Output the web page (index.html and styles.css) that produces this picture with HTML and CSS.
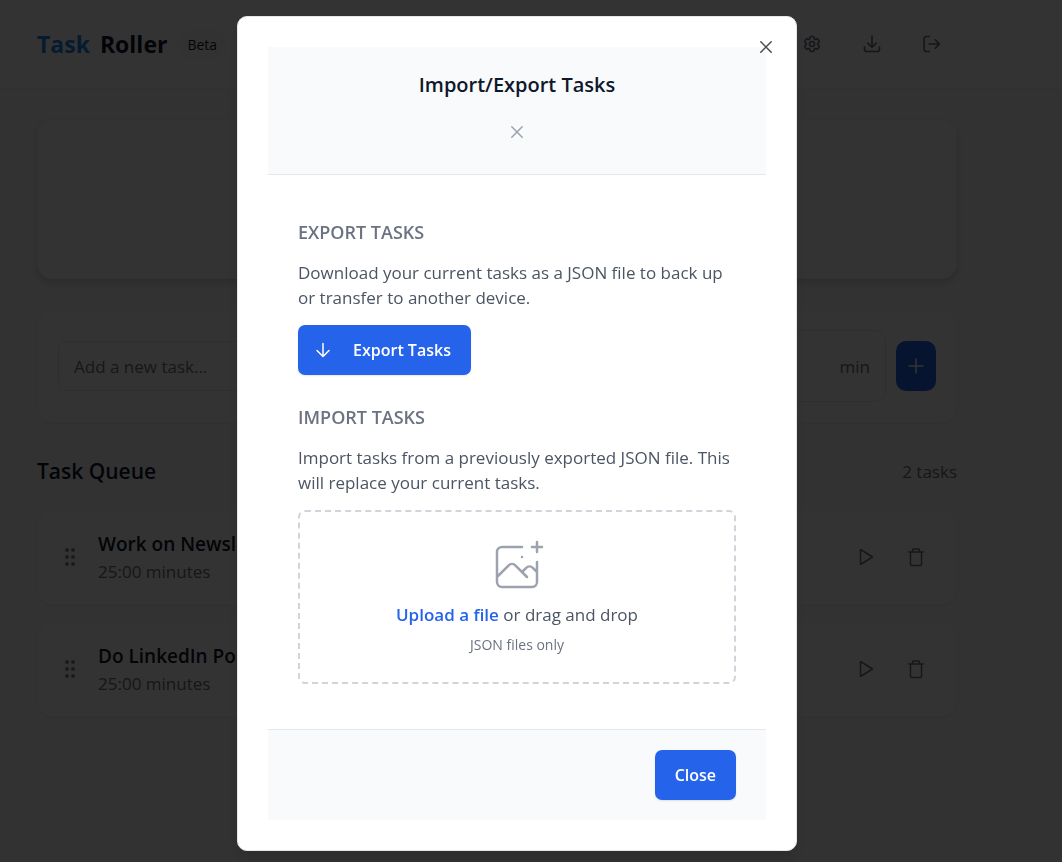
FILE: index.html
```html
<!DOCTYPE html>
<html lang="en">
<head>
    <meta charset="UTF-8">
    <meta name="viewport" content="width=device-width, initial-scale=1.0">
    <title>Task Roller</title>
    <link rel="stylesheet" href="styles.css">
</head>
<body>
    <header class="header">
        <div class="brand">
            <h1 class="logo"><span class="logo-accent">Task</span> <span>Roller</span></h1>
            <span class="badge">Beta</span>
        </div>
        <div class="header-actions">
            <button type="button" class="icon-button header-button" aria-label="Settings">
                <svg class="icon" viewBox="0 0 24 24"><path d="M9.594 3.94c.09-.542.56-.94 1.11-.94h2.593c.55 0 1.02.398 1.11.94l.213 1.281c.063.374.313.686.645.87.074.04.147.083.22.127.324.196.72.257 1.075.124l1.217-.456a1.125 1.125 0 011.37.49l1.296 2.247a1.125 1.125 0 01-.26 1.431l-1.003.827c-.293.24-.438.613-.431.992a6.759 6.759 0 010 .255c-.007.378.138.75.43.99l1.005.828c.424.35.534.954.26 1.43l-1.298 2.247a1.125 1.125 0 01-1.369.491l-1.217-.456c-.355-.133-.75-.072-1.076.124a6.57 6.57 0 01-.22.128c-.331.183-.581.495-.644.869l-.213 1.28c-.09.543-.56.941-1.11.941h-2.594c-.55 0-1.02-.398-1.11-.94l-.213-1.281c-.062-.374-.312-.686-.644-.87a6.52 6.52 0 01-.22-.127c-.325-.196-.72-.257-1.076-.124l-1.217.456a1.125 1.125 0 01-1.369-.49l-1.297-2.247a1.125 1.125 0 01.26-1.431l1.004-.827c.292-.24.437-.613.43-.992a6.932 6.932 0 010-.255c.007-.378-.138-.75-.43-.99l-1.004-.828a1.125 1.125 0 01-.26-1.43l1.297-2.247a1.125 1.125 0 011.37-.491l1.216.456c.356.133.751.072 1.076-.124.072-.044.146-.087.22-.128.332-.183.582-.495.644-.869l.214-1.281z"/><circle cx="12" cy="12" r="3"/></svg>
            </button>
            <button type="button" class="icon-button header-button" aria-label="Import or export">
                <svg class="icon" viewBox="0 0 24 24"><path d="M3 15.500v3A2.500 2.500 0 005.500 21h13a2.500 2.500 0 002.500-2.500v-3M17 11l-5 5-5-5M12 16V2.500"/></svg>
            </button>
            <button type="button" class="icon-button header-button" aria-label="Log out">
                <svg class="icon" viewBox="0 0 24 24"><path d="M9 3H5a2.500 2.500 0 00-2.500 2.500v13A2.500 2.500 0 005 21h4M8.500 12H21M16 7l5 5-5 5"/></svg>
            </button>
        </div>
    </header>

    <main class="main">
        <section class="card timer-card"></section>

        <form class="card add-form">
            <input type="text" class="task-input" placeholder="Add a new task..." aria-label="New task">
            <div class="duration">
                <input type="number" class="duration-input" value="25" aria-label="Duration in minutes">
                <span>min</span>
            </div>
            <button type="button" class="add-button" aria-label="Add task">
                <svg class="icon" viewBox="0 0 20 20"><path d="M10 3v14M3 10h14"/></svg>
            </button>
        </form>

        <section>
            <div class="queue-header">
                <h2 class="queue-title">Task Queue</h2>
                <span class="queue-count">2 tasks</span>
            </div>
            <ul class="task-list">
                <li class="card task">
                    <svg class="drag-handle" viewBox="0 0 24 24"><circle cx="9" cy="5" r="2"/><circle cx="15" cy="5" r="2"/><circle cx="9" cy="12" r="2"/><circle cx="15" cy="12" r="2"/><circle cx="9" cy="19" r="2"/><circle cx="15" cy="19" r="2"/></svg>
                    <div class="task-info">
                        <h3 class="task-name">Work on Newsletter</h3>
                        <p class="task-time">25:00 minutes</p>
                    </div>
                    <div class="task-actions">
                        <button type="button" class="icon-button" aria-label="Start task"><svg class="icon" viewBox="0 0 20 20"><path d="M4.500 2.500v15L16.500 10z"/></svg></button>
                        <button type="button" class="icon-button" aria-label="Delete task"><svg class="icon" viewBox="0 0 20 20"><path d="M2.500 5h15M4.500 5v12.500a1 1 0 001 1h9a1 1 0 001-1V5M6.500 5V3a1 1 0 011-1h5a1 1 0 011 1v2"/></svg></button>
                    </div>
                </li>
                <li class="card task">
                    <svg class="drag-handle" viewBox="0 0 24 24"><circle cx="9" cy="5" r="2"/><circle cx="15" cy="5" r="2"/><circle cx="9" cy="12" r="2"/><circle cx="15" cy="12" r="2"/><circle cx="9" cy="19" r="2"/><circle cx="15" cy="19" r="2"/></svg>
                    <div class="task-info">
                        <h3 class="task-name">Do LinkedIn Post</h3>
                        <p class="task-time">25:00 minutes</p>
                    </div>
                    <div class="task-actions">
                        <button type="button" class="icon-button" aria-label="Start task"><svg class="icon" viewBox="0 0 20 20"><path d="M4.500 2.500v15L16.500 10z"/></svg></button>
                        <button type="button" class="icon-button" aria-label="Delete task"><svg class="icon" viewBox="0 0 20 20"><path d="M2.500 5h15M4.500 5v12.500a1 1 0 001 1h9a1 1 0 001-1V5M6.500 5V3a1 1 0 011-1h5a1 1 0 011 1v2"/></svg></button>
                    </div>
                </li>
            </ul>
        </section>
    </main>

    <div class="overlay">
        <div class="modal" role="dialog" aria-modal="true" aria-labelledby="modalTitle">
            <div class="modal-header">
                <h2 class="modal-title" id="modalTitle">Import/Export Tasks</h2>
                <button type="button" class="icon-button dismiss" aria-label="Dismiss">
                    <svg class="icon" viewBox="0 0 20 20"><path d="M4.800 4.800l10.400 10.400M15.200 4.800L4.800 15.200"/></svg>
                </button>
            </div>

            <div class="modal-body">
                <section class="modal-section">
                    <h3 class="section-title">EXPORT TASKS</h3>
                    <p class="section-text">Download your current tasks as a JSON file to back up or transfer to another device.</p>
                    <button type="button" class="button export-button">
                        <svg class="icon" viewBox="0 0 20 20"><path d="M10 3.500v13M4 10.500l6 6 6-6"/></svg>
                        Export Tasks
                    </button>
                </section>

                <section class="modal-section">
                    <h3 class="section-title">IMPORT TASKS</h3>
                    <p class="section-text">Import tasks from a previously exported JSON file. This will replace your current tasks.</p>
                    <div class="dropzone">
                        <svg class="upload-icon" viewBox="0 0 48 48"><path d="M28 8H12a4 4 0 00-4 4v20m32-12v8m0 0v8a4 4 0 01-4 4H12a4 4 0 01-4-4v-4m32-4l-3.172-3.172a4 4 0 00-5.656 0L28 28M8 32l9.172-9.172a4 4 0 015.656 0L28 28m0 0l4 4m4-24h8m-4-4v8m-12 4h.02"/></svg>
                        <p class="upload-text"><label for="taskFile" class="upload-label">Upload a file</label> or drag and drop</p>
                        <input type="file" id="taskFile" class="file-input" accept=".json">
                        <p class="upload-hint">JSON files only</p>
                    </div>
                </section>
            </div>

            <div class="modal-footer">
                <button type="button" class="button">Close</button>
            </div>

            <button type="button" class="icon-button modal-close" aria-label="Close dialog">
                <svg class="icon" viewBox="0 0 20 20"><path d="M4.800 4.800l10.400 10.400M15.200 4.800L4.800 15.200"/></svg>
            </button>
        </div>
    </div>
</body>
</html>
```
FILE: styles.css
```css
* {
    box-sizing: border-box;
}

body {
    margin: 0;
    height: 100vh;
    overflow: hidden;
    background-color: #fafafa;
    color: #0f172a;
    font-family: "Segoe UI", "Open Sans", "Noto Sans", sans-serif;
    font-size: 17px;
    line-height: 25px;
}

h1, h2, h3, p, ul {
    margin: 0;
    padding: 0;
}

button, input {
    font: inherit;
}

.icon {
    width: 20px;
    height: 20px;
    flex-shrink: 0;
    fill: none;
    stroke: currentColor;
    stroke-width: 1.5;
    stroke-linecap: round;
    stroke-linejoin: round;
}

.icon-button {
    display: flex;
    align-items: center;
    justify-content: center;
    width: 40px;
    height: 40px;
    padding: 0;
    border: none;
    background: none;
    color: #6b7280;
    cursor: pointer;
}

/* Page header */
.header {
    display: flex;
    align-items: center;
    justify-content: space-between;
    padding: 20px 105px 20px 37px;
    background-color: #fff;
    border-bottom: 1px solid #f1f1f1;
}
.brand {
    display: flex;
    align-items: center;
    gap: 10px;
}
.logo {
    display: flex;
    gap: 10px;
    font-size: 23px;
    font-weight: 700;
    line-height: 35px;
}
.logo-accent {
    color: #1e88e5;
}
.badge {
    padding: 2px 10px;
    border-radius: 15px;
    background-color: #fafafa;
    font-size: 14px;
}
.header-actions {
    display: flex;
    gap: 10px;
}
.header-button {
    width: 50px;
    height: 48px;
}
.header-button .icon {
    stroke-width: 2;
}

/* Page content */
.main {
    display: flex;
    flex-direction: column;
    gap: 30px;
    padding: 30px 105px 30px 37px;
}
.card {
    border: 1px solid #f6f6f6;
    border-radius: 15px;
    background-color: #fff;
    box-shadow: 0 1px 2px rgba(0, 0, 0, 0.05);
}
.timer-card {
    min-height: 160px;
    box-shadow: 0 4px 8px rgba(0, 0, 0, 0.15);
}
.add-form {
    display: flex;
    align-items: center;
    gap: 10px;
    padding: 20px;
}
.task-input {
    flex: 1;
    height: 50px;
    padding: 0 15px;
    border: 1px solid #e5e7eb;
    border-radius: 8px;
    background: none;
}
.task-input::placeholder {
    color: #757575;
}
.duration {
    display: flex;
    align-items: center;
    gap: 10px;
    padding: 10px 15px;
    border: 1px solid #e5e7eb;
    border-radius: 10px;
    color: #6b7280;
}
.duration-input {
    width: 80px;
    height: 50px;
    border: none;
    background: none;
}
.add-button {
    display: flex;
    align-items: center;
    justify-content: center;
    width: 40px;
    height: 50px;
    padding: 0;
    border: none;
    border-radius: 10px;
    background-color: #2563eb;
    color: #fff;
}
.queue-header {
    display: flex;
    align-items: center;
    justify-content: space-between;
    margin-bottom: 20px;
}
.queue-title {
    font-size: 21px;
    font-weight: 600;
    line-height: 36px;
}
.queue-count {
    color: #6b7280;
}
.task-list {
    display: flex;
    flex-direction: column;
    gap: 16px;
    list-style: none;
}
.task {
    display: flex;
    align-items: center;
    gap: 16px;
    padding: 19px 20px;
}
.drag-handle {
    width: 24px;
    height: 24px;
    fill: #808792;
}
.task-info {
    flex: 1;
}
.task-name {
    font-size: 19px;
    font-weight: 600;
    line-height: 30px;
}
.task-time {
    line-height: 26px;
    color: #6b7280;
}
.task-actions {
    display: flex;
    gap: 10px;
}

/* Import/export dialog */
.overlay {
    position: fixed;
    inset: 0;
    display: flex;
    align-items: center;
    justify-content: center;
    padding: 5px 28px 0 0;
    background-color: rgba(0, 0, 0, 0.8);
}
.modal {
    position: relative;
    width: 100%;
    max-width: 560px;
    padding: 30px;
    border: 1px solid #e5e7eb;
    border-radius: 10px;
    background-color: #fff;
    box-shadow: 0 10px 15px rgba(0, 0, 0, 0.1);
}
.modal-header {
    display: flex;
    flex-direction: column;
    align-items: center;
    gap: 10px;
    padding: 20px 30px 22px;
    border-bottom: 1px solid #e5e7eb;
    background-color: #f9fafb;
}
.modal-title {
    font-size: 20px;
    font-weight: 600;
    line-height: 35px;
}
.dismiss {
    color: #9ca3af;
}
.modal-close {
    position: absolute;
    top: 10px;
    right: 10px;
    color: #4b4b4b;
}
.modal-body {
    display: flex;
    flex-direction: column;
    gap: 30px;
    padding: 45px 30px;
}
.modal-section {
    display: flex;
    flex-direction: column;
    align-items: flex-start;
    gap: 15px;
}
.section-title {
    font-size: 18px;
    font-weight: 600;
    color: #6b7280;
}
.section-text {
    color: #4b5563;
}
.button {
    display: flex;
    align-items: center;
    height: 50px;
    padding: 0 20px;
    border: none;
    border-radius: 7px;
    background-color: #2563eb;
    color: #fff;
    font-size: 16px;
    font-weight: 600;
    box-shadow: 0 1px 2px rgba(0, 0, 0, 0.1);
    cursor: pointer;
}
.export-button {
    gap: 20px;
    padding-left: 15px;
}
.dropzone {
    display: flex;
    flex-direction: column;
    align-items: center;
    gap: 5px;
    width: 100%;
    padding: 25px;
    border: 2px dashed #d1d5db;
    border-radius: 7px;
}
.upload-icon {
    width: 60px;
    height: 60px;
    fill: none;
    stroke: #9ca3af;
    stroke-width: 2;
    stroke-linecap: round;
    stroke-linejoin: round;
}
.upload-text {
    color: #4b5563;
}
.upload-label {
    color: #2563eb;
    font-weight: 600;
    cursor: pointer;
}
.file-input {
    display: none;
}
.upload-hint {
    color: #6b7280;
    font-size: 14px;
}
.modal-footer {
    display: flex;
    justify-content: flex-end;
    padding: 20px 30px;
    border-top: 1px solid #e5e7eb;
    background-color: #f9fafb;
}
```
